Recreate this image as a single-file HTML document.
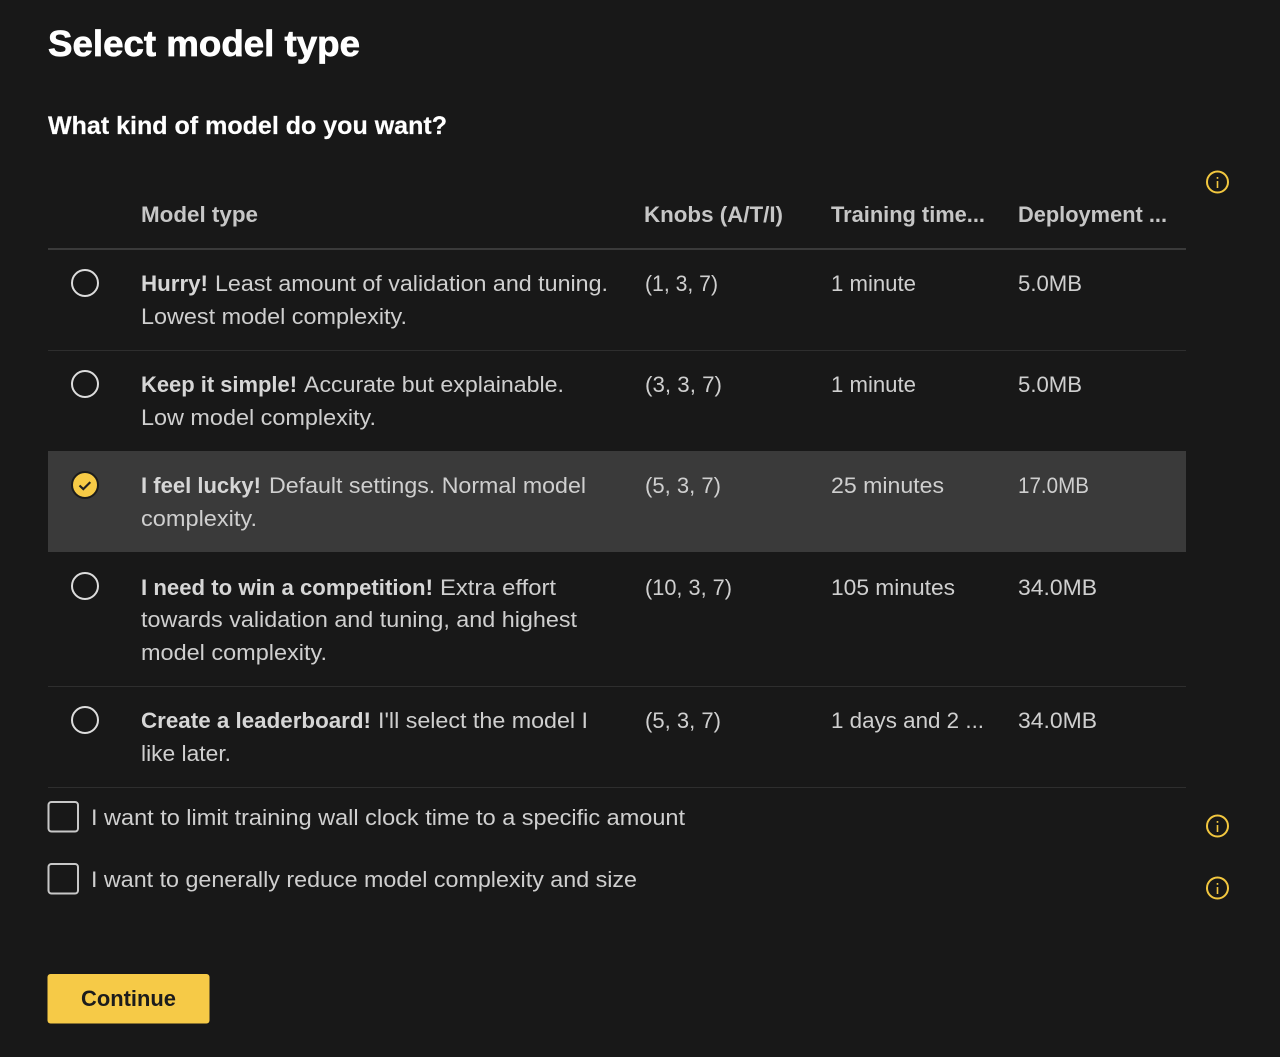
<!DOCTYPE html>
<html lang="en">
<head>
<meta charset="utf-8">
<title>Select model type</title>
<style>
html,body{margin:0;padding:0;background:#181818;}
svg{display:block;}
text{font-family:"Liberation Sans",sans-serif;font-size:22px;fill:#cfcfcf;}
.b{font-weight:700;fill:#d6d6d6;}
.h{font-weight:700;fill:#c6c6c6;}
.w{font-weight:700;fill:#fff;}
.r{fill:none;stroke:#dcdcdc;stroke-width:2;}
.c{fill:none;stroke:#c8c8c8;stroke-width:2;}
.i{fill:none;stroke:#f2c73f;stroke-width:2;}
.l{stroke:#2e2e2e;stroke-width:1;}
</style>
</head>
<body>
<svg width="1280" height="1057" viewBox="0 0 1280 1057" xmlns="http://www.w3.org/2000/svg">
<rect width="1280" height="1057" fill="#181818"/>
<text class="w" x="48" y="56" style="font-size:36px;stroke:#fff;stroke-width:.7" textLength="312" lengthAdjust="spacingAndGlyphs">Select model type</text>
<text class="w" x="48" y="134" style="font-size:25px;stroke:#fff;stroke-width:.2" textLength="399" lengthAdjust="spacingAndGlyphs">What kind of model do you want?</text>

<g><circle class="i" cx="1217.5" cy="182" r="10.5"/><rect x="1216.7" y="181" width="1.6" height="7" fill="#f2c73f"/><rect x="1216.7" y="177" width="1.6" height="1.8" fill="#f2c73f"/></g>

<text class="h" x="141" y="222" textLength="117" lengthAdjust="spacingAndGlyphs">Model type</text>
<text class="h" x="644" y="222" textLength="139" lengthAdjust="spacingAndGlyphs">Knobs (A/T/I)</text>
<text class="h" x="831" y="222" textLength="154" lengthAdjust="spacingAndGlyphs">Training time...</text>
<text class="h" x="1018" y="222" textLength="149" lengthAdjust="spacingAndGlyphs">Deployment ...</text>
<rect x="48" y="248" width="1138" height="2" fill="#3a3a3a"/>

<circle class="r" cx="85" cy="283" r="13"/>
<text class="b" x="141" y="291" textLength="67" lengthAdjust="spacingAndGlyphs">Hurry!</text>
<text x="215" y="291" textLength="393" lengthAdjust="spacingAndGlyphs">Least amount of validation and tuning.</text>
<text x="141" y="324" textLength="266" lengthAdjust="spacingAndGlyphs">Lowest model complexity.</text>
<text x="645" y="291" textLength="73" lengthAdjust="spacingAndGlyphs">(1, 3, 7)</text>
<text x="831" y="291" textLength="85" lengthAdjust="spacingAndGlyphs">1 minute</text>
<text x="1018" y="291" textLength="64" lengthAdjust="spacingAndGlyphs">5.0MB</text>
<line class="l" x1="48" x2="1186" y1="350.5" y2="350.5"/>

<circle class="r" cx="85" cy="384" r="13"/>
<text class="b" x="141" y="392" textLength="156" lengthAdjust="spacingAndGlyphs">Keep it simple!</text>
<text x="304" y="392" textLength="260" lengthAdjust="spacingAndGlyphs">Accurate but explainable.</text>
<text x="141" y="425" textLength="235" lengthAdjust="spacingAndGlyphs">Low model complexity.</text>
<text x="645" y="392" textLength="77" lengthAdjust="spacingAndGlyphs">(3, 3, 7)</text>
<text x="831" y="392" textLength="85" lengthAdjust="spacingAndGlyphs">1 minute</text>
<text x="1018" y="392" textLength="64" lengthAdjust="spacingAndGlyphs">5.0MB</text>

<rect x="48" y="451" width="1138" height="101" fill="#3a3a3a"/>
<circle cx="85" cy="485" r="13" fill="#f7cb46" stroke="#1c1c1c" stroke-width="2"/>
<path d="M79.5 485.5l3.8 3.6 7-7" fill="none" stroke="#222" stroke-width="2.2"/>
<text class="b" x="141" y="493" textLength="120" lengthAdjust="spacingAndGlyphs">I feel lucky!</text>
<text x="269" y="493" textLength="317" lengthAdjust="spacingAndGlyphs">Default settings. Normal model</text>
<text x="141" y="526" textLength="116" lengthAdjust="spacingAndGlyphs">complexity.</text>
<text x="645" y="493" textLength="76" lengthAdjust="spacingAndGlyphs">(5, 3, 7)</text>
<text x="831" y="493" textLength="113" lengthAdjust="spacingAndGlyphs">25 minutes</text>
<text x="1018" y="493" textLength="71" lengthAdjust="spacingAndGlyphs">17.0MB</text>

<circle class="r" cx="85" cy="586" r="13"/>
<text class="b" x="141" y="595" textLength="292" lengthAdjust="spacingAndGlyphs">I need to win a competition!</text>
<text x="440" y="595" textLength="116" lengthAdjust="spacingAndGlyphs">Extra effort</text>
<text x="141" y="627" textLength="436" lengthAdjust="spacingAndGlyphs">towards validation and tuning, and highest</text>
<text x="141" y="660" textLength="186" lengthAdjust="spacingAndGlyphs">model complexity.</text>
<text x="645" y="595" textLength="87" lengthAdjust="spacingAndGlyphs">(10, 3, 7)</text>
<text x="831" y="595" textLength="124" lengthAdjust="spacingAndGlyphs">105 minutes</text>
<text x="1018" y="595" textLength="79" lengthAdjust="spacingAndGlyphs">34.0MB</text>
<line class="l" x1="48" x2="1186" y1="686.5" y2="686.5"/>

<circle class="r" cx="85" cy="720" r="13"/>
<text class="b" x="141" y="728" textLength="230" lengthAdjust="spacingAndGlyphs">Create a leaderboard!</text>
<text x="378" y="728" textLength="210" lengthAdjust="spacingAndGlyphs">I'll select the model I</text>
<text x="141" y="761" textLength="90" lengthAdjust="spacingAndGlyphs">like later.</text>
<text x="645" y="728" textLength="76" lengthAdjust="spacingAndGlyphs">(5, 3, 7)</text>
<text x="831" y="728" textLength="153" lengthAdjust="spacingAndGlyphs">1 days and 2 ...</text>
<text x="1018" y="728" textLength="79" lengthAdjust="spacingAndGlyphs">34.0MB</text>
<line class="l" x1="48" x2="1186" y1="787.5" y2="787.5"/>

<rect class="c" x="48.5" y="802" width="29.5" height="29.5" rx="3"/>
<text x="91" y="825" textLength="594" lengthAdjust="spacingAndGlyphs">I want to limit training wall clock time to a specific amount</text>
<g><circle class="i" cx="1217.5" cy="826" r="10.5"/><rect x="1216.7" y="825" width="1.6" height="7" fill="#f2c73f"/><rect x="1216.7" y="821" width="1.6" height="1.8" fill="#f2c73f"/></g>

<rect class="c" x="48.5" y="864" width="29.5" height="29.5" rx="3"/>
<text x="91" y="887" textLength="546" lengthAdjust="spacingAndGlyphs">I want to generally reduce model complexity and size</text>
<g><circle class="i" cx="1217.5" cy="888" r="10.5"/><rect x="1216.7" y="887" width="1.6" height="7" fill="#f2c73f"/><rect x="1216.7" y="883" width="1.6" height="1.8" fill="#f2c73f"/></g>

<rect x="47.5" y="974" width="162" height="49.5" rx="3" fill="#f6ca47"/>
<text x="81" y="1006" style="font-weight:700;fill:#1c1c1c" textLength="95" lengthAdjust="spacingAndGlyphs">Continue</text>
</svg>
</body>
</html>
